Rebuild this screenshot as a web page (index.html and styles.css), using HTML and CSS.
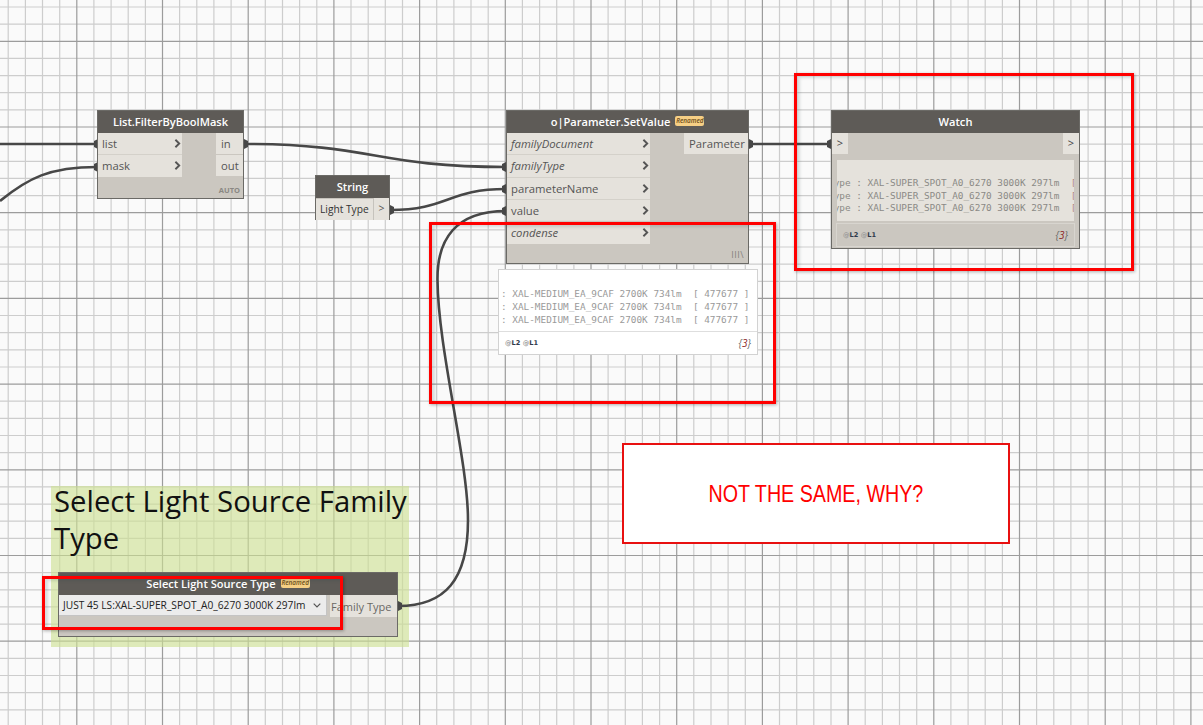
FILE: index.html
```html
<!DOCTYPE html>
<html lang="en">
<head>
<meta charset="utf-8">
<title>Dynamo graph</title>
<link rel="stylesheet" href="styles.css">
</head>
<body>
<svg class="defs" width="0" height="0" aria-hidden="true">
  <symbol id="chev" viewBox="0 0 7 9"><path d="M1.4 .8L5.2 4.5L1.4 8.2"/></symbol>
</svg>
<main class="canvas">
  <svg class="layer" width="1203" height="725" viewBox="0 0 1203 725" aria-hidden="true">
    <path class="grid-minor" d="M8.2 0V725M25.4 0V725M42.5 0V725M59.7 0V725M93.9 0V725M111.1 0V725M128.2 0V725M145.4 0V725M179.6 0V725M196.8 0V725M213.9 0V725M231.1 0V725M265.3 0V725M282.5 0V725M299.6 0V725M316.8 0V725M351 0V725M368.2 0V725M385.3 0V725M402.5 0V725M436.7 0V725M453.9 0V725M471 0V725M488.2 0V725M522.4 0V725M539.6 0V725M556.7 0V725M573.9 0V725M608.1 0V725M625.3 0V725M642.4 0V725M659.6 0V725M693.8 0V725M711 0V725M728.1 0V725M745.3 0V725M779.5 0V725M796.7 0V725M813.8 0V725M831 0V725M865.2 0V725M882.4 0V725M899.5 0V725M916.7 0V725M950.9 0V725M968.1 0V725M985.2 0V725M1002.4 0V725M1036.6 0V725M1053.8 0V725M1070.9 0V725M1088.1 0V725M1122.3 0V725M1139.5 0V725M1156.6 0V725M1173.8 0V725M0 7H1203M0 24.2H1203M0 58.4H1203M0 75.6H1203M0 92.7H1203M0 109.9H1203M0 144.1H1203M0 161.3H1203M0 178.4H1203M0 195.6H1203M0 229.8H1203M0 247H1203M0 264.1H1203M0 281.3H1203M0 315.5H1203M0 332.7H1203M0 349.8H1203M0 367H1203M0 401.2H1203M0 418.4H1203M0 435.5H1203M0 452.7H1203M0 486.9H1203M0 504.1H1203M0 521.2H1203M0 538.4H1203M0 572.6H1203M0 589.8H1203M0 606.9H1203M0 624.1H1203M0 658.3H1203M0 675.5H1203M0 692.6H1203M0 709.8H1203"/>
    <path class="grid-major" d="M76.8 0V725M162.5 0V725M248.2 0V725M333.9 0V725M419.6 0V725M505.3 0V725M591 0V725M676.7 0V725M762.4 0V725M848.1 0V725M933.8 0V725M1019.5 0V725M1105.2 0V725M1190.9 0V725M0 41.3H1203M0 127H1203M0 212.7H1203M0 298.4H1203M0 384.1H1203M0 469.8H1203M0 555.5H1203M0 641.2H1203"/>
  </svg>

  <section class="group">
    <h2 class="group-title">Select Light Source Family<br>Type</h2>
  </section>

  <svg class="layer" width="1203" height="725" viewBox="0 0 1203 725" aria-hidden="true">
    <g class="wires">
      <path d="M0 144H97"/>
      <path d="M0 201C28 178 50 167 97 167"/>
      <path d="M244 144C375 144 375 167 506 167"/>
      <path d="M390 210C448 210 448 189 506 189"/>
      <path d="M398 606C445 606 468 580 468 520C468 460 438 350 437.5 280C437 240 455 211 506 211"/>
      <path d="M749 144H831"/>
    </g>
    <g class="nubs">
      <path d="M94 141L98 139V149L94 147ZM94 164L98 162V172L94 170Z"/>
      <path d="M244 139L248 141V147L244 149Z"/>
      <path d="M390 205L394 207V213L390 215Z"/>
      <path d="M502 164L506 162V172L502 170ZM502 186L506 184V194L502 192ZM502 208L506 206V216L502 214Z"/>
      <path d="M749 139L753 141V147L749 149Z"/>
      <path d="M827 141L831 139V149L827 147Z"/>
      <path d="M398 601L402 603V609L398 611Z"/>
    </g>
  </svg>

  <article class="node node-filter">
    <header class="node-head">List.FilterByBoolMask</header>
    <div class="node-body">
      <div class="col-in col-in-filter">
        <div class="port"><span>list</span><svg class="chev"><use href="#chev"/></svg></div>
        <div class="port port-plain"><span>mask</span><svg class="chev"><use href="#chev"/></svg></div>
      </div>
      <div class="col-out col-out-filter">
        <div class="port port-out"><span>in</span></div>
        <div class="port port-out"><span>out</span></div>
      </div>
    </div>
    <footer class="node-foot lacing-auto">AUTO</footer>
  </article>

  <article class="node node-string">
    <header class="node-head">String</header>
    <div class="string-row"><span class="string-input">Light Type</span><span class="string-arrow">&gt;</span></div>
  </article>

  <article class="node node-param">
    <header class="node-head">o|Parameter.SetValue<span class="badge">Renamed</span></header>
    <div class="node-body">
      <div class="col-in col-in-param">
        <div class="port"><i>familyDocument</i><svg class="chev"><use href="#chev"/></svg></div>
        <div class="port"><i>familyType</i><svg class="chev"><use href="#chev"/></svg></div>
        <div class="port"><span>parameterName</span><svg class="chev"><use href="#chev"/></svg></div>
        <div class="port"><span>value</span><svg class="chev"><use href="#chev"/></svg></div>
        <div class="port port-plain"><i>condense</i><svg class="chev"><use href="#chev"/></svg></div>
      </div>
      <div class="col-out col-out-param">
        <div class="port port-out"><span>Parameter</span></div>
      </div>
    </div>
    <footer class="node-foot lacing-cross">III\</footer>
  </article>

  <aside class="preview">
    <div class="preview-text">
      <div class="mono-line">: XAL-MEDIUM_EA_9CAF 2700K 734lm  [ 477677 ]</div>
      <div class="mono-line">: XAL-MEDIUM_EA_9CAF 2700K 734lm  [ 477677 ]</div>
      <div class="mono-line">: XAL-MEDIUM_EA_9CAF 2700K 734lm  [ 477677 ]</div>
    </div>
    <div class="levels"><span class="level-tags"><em>@</em>L2 <em>@</em>L1</span><span class="count">{<u>3</u>}</span></div>
  </aside>

  <article class="node node-watch">
    <header class="node-head">Watch</header>
    <div class="watch-ports"><span class="watch-port">&gt;</span><span class="watch-port">&gt;</span></div>
    <div class="watch-panel">
      <div class="watch-text">
        <div class="mono-line">Type : XAL-SUPER_SPOT_A0_6270 3000K 297lm  <s>[</s></div>
        <div class="mono-line">Type : XAL-SUPER_SPOT_A0_6270 3000K 297lm  <s>[</s></div>
        <div class="mono-line">Type : XAL-SUPER_SPOT_A0_6270 3000K 297lm  <s>[</s></div>
      </div>
    </div>
    <div class="levels levels-watch"><span class="level-tags"><em>@</em>L2 <em>@</em>L1</span><span class="count">{<u>3</u>}</span></div>
  </article>

  <article class="node node-select">
    <header class="node-head node-head-select">Select Light Source Type<span class="badge">Renamed</span></header>
    <div class="select-row">
      <div class="dropdown"><span>JUST 45 LS:XAL-SUPER_SPOT_A0_6270 3000K 297lm</span>
        <svg class="caret" width="8" height="5" viewBox="0 0 8 5" aria-hidden="true"><path d="M.7.7L4 4L7.3.7"/></svg>
      </div>
      <div class="port port-out port-family"><span>Family Type</span></div>
    </div>
  </article>

  <div class="mark mark-watch"></div>
  <div class="mark mark-preview"></div>
  <div class="mark mark-select"></div>
  <div class="note"><span class="note-text">NOT THE SAME, WHY?</span></div>
</main>
</body>
</html>
```

FILE: styles.css
```css
* { box-sizing: border-box; }
html, body { margin: 0; padding: 0; }
body { background: #fafafa; font-family: "Open Sans", "Liberation Sans", sans-serif; overflow: hidden; }

.defs { position: absolute; }
.canvas { position: relative; width: 1203px; height: 725px; overflow: hidden; background: #fafafa; }
.layer { position: absolute; left: 0; top: 0; display: block; }
.grid-minor { fill: none; stroke: #cdcdcd; stroke-width: 1.2; }
.grid-major { fill: none; stroke: #9c9c9c; stroke-width: 1.2; }

.wires path { fill: none; stroke: #474747; stroke-width: 2.6; }
.nubs path { fill: #474747; }

.group { position: absolute; left: 51px; top: 486px; width: 358px; height: 161px; padding: 0 0 0 3px; background: rgba(205, 224, 145, 0.62); }
.group-title { margin: -3px 0 0; font-family: "Open Sans", sans-serif; font-weight: 400; font-size: 29.3px; line-height: 37px; color: #111; white-space: nowrap; }

.node { position: absolute; display: flex; flex-direction: column; background: #cbc7c0; border: 1px solid #6b6a66; color: #555; font-size: 11.3px; }
.node-head { flex: none; height: 22px; padding-bottom: 2px; background: #5e5b57; color: #fff; font-size: 11.1px; font-weight: 600; display: flex; align-items: center; justify-content: center; gap: 5px; white-space: nowrap; }
.node-body { flex: 1; display: flex; justify-content: space-between; }
.node-foot { flex: none; text-align: right; }

.node-filter { left: 97px; top: 110px; width: 147px; height: 89px; }
.node-string { left: 315px; top: 175px; width: 75px; height: 45px; }
.node-param { left: 506px; top: 110px; width: 243px; height: 154px; }
.node-watch { left: 831px; top: 110px; width: 249px; height: 139px; }
.node-select { left: 58px; top: 572px; width: 340px; height: 65px; }

.col-in, .col-out { display: flex; flex-direction: column; }
.col-in-filter { width: 84px; }
.col-out-filter { width: 27px; }
.col-in-param { width: 143px; }
.col-in-param .port { height: 22.25px; }
.col-out-param { width: 64px; }

.port { height: 22px; display: flex; align-items: center; justify-content: space-between; padding: 0 0 0 4px; background: #e5e2dc; border-bottom: 1px solid #d4d1ca; white-space: nowrap; }
.port-plain { border-bottom-color: #e5e2dc; }
.port-out { justify-content: flex-start; padding-left: 5px; }
.col-out .port { border-bottom-color: #cbc7c0; }
.chev { width: 7px; height: 9px; flex: none; margin-right: 1px; fill: none; stroke: #555; stroke-width: 1.9; }

.lacing-auto { padding: 0 3px 3px 0; font-size: 7.5px; font-weight: 700; color: #8a8883; }
.lacing-cross { padding: 0 4px 2px 0; font-size: 9px; color: #85827d; letter-spacing: .5px; }

.string-row { display: flex; height: 22px; background: #e5e2dc; }
.string-input { width: 58px; padding: 0 0 0 4px; font-size: 10.2px; line-height: 21px; color: #333; border: 1px solid #c6c3bd; border-width: 1px 1px 0 0; white-space: nowrap; }
.string-arrow { flex: 1; text-align: center; font-size: 10.5px; line-height: 21px; color: #555; }

.badge { display: inline-block; flex: none; width: 29px; height: 10px; border-radius: 2px; background: #f6cf85; color: #6b4d18; font-size: 6.4px; line-height: 10px; font-style: italic; font-weight: 600; text-align: center; }

.preview { position: absolute; left: 498px; top: 269px; width: 260px; height: 86px; display: flex; flex-direction: column; background: #fff; border: 1px solid #d2d2d2; }
.preview-text { flex: none; height: 62px; padding: 17px 0 0 2px; border-bottom: 1px solid #dedede; font-family: "DejaVu Sans Mono", monospace; font-size: 9.4px; line-height: 13px; color: #9a9a9a; overflow: hidden; }
.mono-line { white-space: pre; }

.levels { flex: 1; display: flex; justify-content: space-between; align-items: center; padding: 0 6px; }
.level-tags { font-family: "DejaVu Sans", sans-serif; font-size: 6.6px; font-weight: 700; color: #2f3a4a; }
.level-tags em { font-style: normal; color: #999; }
.count { font-size: 10px; font-style: italic; color: #666; }
.count u { text-decoration: none; color: #8c1c1c; }

.watch-ports { flex: none; display: flex; justify-content: space-between; padding: 0; }
.watch-port { width: 16px; height: 21px; background: #e5e2dc; text-align: center; font-size: 11px; line-height: 20px; color: #444; }
.watch-panel { flex: none; margin: 6px 5px 0; height: 61px; background: #e5e2dc; overflow: hidden; }
.watch-text { margin-left: -9px; padding-top: 17px; font-family: "DejaVu Sans Mono", monospace; font-size: 9.4px; line-height: 12.5px; color: #8b8a86; }
.watch-text s { text-decoration: none; color: #b08a8a; }
.levels-watch { flex: none; height: 24px; margin: 2px 4px 3px; padding: 0 6px; border: 1px solid #d8d5cf; }

.select-row { display: flex; justify-content: space-between; height: 22px; }
.dropdown { width: 268px; height: 21px; padding: 0 5px 0 4px; display: flex; align-items: center; justify-content: space-between; background: #ececec; border-bottom: 1px solid #c4c4c4; border-right: 1px solid #c4c4c4; color: #222; font-size: 10.2px; white-space: nowrap; }
.caret { fill: none; stroke: #555; stroke-width: 1.2; flex: none; }
.port-family { width: 67px; padding: 0 0 0 1px; font-size: 11px; color: #6a6864; border-bottom: 0; }

.mark { position: absolute; border: 3px solid #f00; box-shadow: 1px 1px 3px rgba(0, 0, 0, .3), inset 3px 2px 3px rgba(40, 70, 70, .16); }
.mark-watch { left: 794px; top: 73px; width: 340px; height: 198px; }
.mark-preview { left: 429px; top: 222px; width: 347px; height: 182px; }
.mark-select { left: 42px; top: 576px; width: 301px; height: 54px; }

.note { position: absolute; left: 622px; top: 443px; width: 388px; height: 101px; display: flex; align-items: center; justify-content: center; background: #fff; border: 2px solid #e81010; color: #f00; font-family: "Liberation Sans", Arial, sans-serif; font-size: 24px; }
.note-text { display: block; white-space: nowrap; transform: scaleX(.82); }
```
